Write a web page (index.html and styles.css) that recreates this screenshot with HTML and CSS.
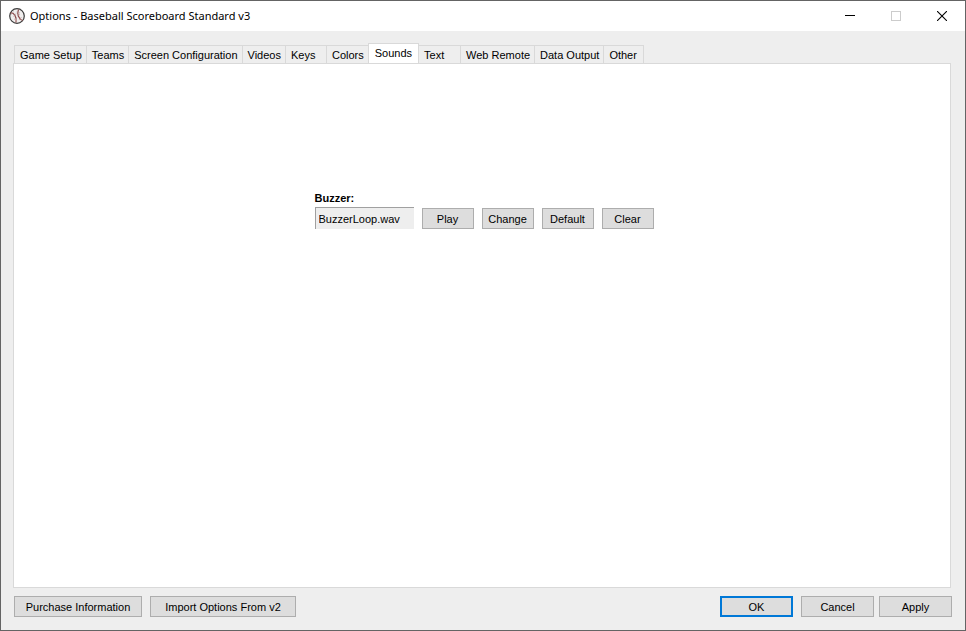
FILE: index.html
```html
<!DOCTYPE html>
<html lang="en">
<head>
    <meta charset="UTF-8">
    <meta name="viewport" content="width=device-width, initial-scale=1.0">
    <title>Options - Baseball Scoreboard Standard v3</title>
    <link rel="stylesheet" href="styles.css">
</head>
<body>
    <div class="window">
        <header class="title-bar">
            <svg class="app-icon" viewBox="0 0 16 16" aria-hidden="true">
                <circle cx="8" cy="8" r="7.3" fill="#f0eeee" stroke="#3c3c3c" stroke-width="1.2"/>
                <path d="M1.500 5C5 4.500 8 8.500 7 14.500M9.500 1.500C7.500 6 10 11.500 13.500 12.500" fill="none" stroke="#8c4a4a" stroke-width="1.2"/>
                <path d="M2.500 6.500L4.500 3.500M4.500 8.500L7 5.500M5 11.500L8 9.500M7.500 4L11 5M8 8L11 6.500M10 12L12.500 9" fill="none" stroke="#b09090" stroke-width="0.6"/>
            </svg>
            <h1>Options - Baseball Scoreboard Standard v3</h1>
            <div class="window-controls">
                <button type="button" aria-label="Minimize">
                    <svg viewBox="0 0 10 10"><path d="M0 4.500H10" stroke="#000000"/></svg>
                </button>
                <button type="button" aria-label="Maximize" disabled>
                    <svg viewBox="0 0 10 10"><rect x="0.5" y="0.5" width="9" height="9" fill="none" stroke="#cccccc"/></svg>
                </button>
                <button type="button" aria-label="Close">
                    <svg viewBox="0 0 10 10"><path d="M0 0L10 10M10 0L0 10" stroke="#000000" stroke-width="1.1"/></svg>
                </button>
            </div>
        </header>

        <main class="content">
            <div class="tabs" role="tablist">
                <button type="button" role="tab">Game Setup</button>
                <button type="button" role="tab">Teams</button>
                <button type="button" role="tab">Screen Configuration</button>
                <button type="button" role="tab">Videos</button>
                <button type="button" role="tab">Keys</button>
                <button type="button" role="tab">Colors</button>
                <button type="button" role="tab" class="active" aria-selected="true">Sounds</button>
                <button type="button" role="tab">Text</button>
                <button type="button" role="tab">Web Remote</button>
                <button type="button" role="tab">Data Output</button>
                <button type="button" role="tab">Other</button>
            </div>
            <section class="tab-page" role="tabpanel">
                <div class="sound">
                    <label for="buzzer">Buzzer:</label>
                    <div class="sound-row">
                        <input type="text" id="buzzer" value="BuzzerLoop.wav" readonly>
                        <button type="button" class="btn">Play</button>
                        <button type="button" class="btn">Change</button>
                        <button type="button" class="btn">Default</button>
                        <button type="button" class="btn">Clear</button>
                    </div>
                </div>
            </section>
        </main>

        <footer class="footer">
            <button type="button" class="btn purchase">Purchase Information</button>
            <button type="button" class="btn import">Import Options From v2</button>
            <div class="dialog-buttons">
                <button type="button" class="btn default">OK</button>
                <button type="button" class="btn">Cancel</button>
                <button type="button" class="btn">Apply</button>
            </div>
        </footer>
    </div>
</body>
</html>
```
FILE: styles.css
```css
* {
    box-sizing: border-box;
}
body {
    margin: 0;
    font-family: "Liberation Sans", Arial, sans-serif;
    font-size: 11px;
    line-height: 14px;
    color: #000;
}
button, input {
    font: inherit;
    color: inherit;
}
.window {
    display: flex;
    flex-direction: column;
    min-height: 100vh;
    border: 1px solid #646464;
    background-color: #eee;
}
.title-bar {
    display: flex;
    align-items: center;
    height: 30px;
    padding-left: 8px;
    background-color: #fff;
}
.app-icon {
    width: 16px;
    height: 16px;
    margin-right: 5px;
}
.title-bar h1 {
    margin: 0;
    font-family: "Noto Sans", sans-serif;
    font-size: 11px;
    font-weight: normal;
}
.window-controls {
    display: flex;
    align-self: stretch;
    margin-left: auto;
}
.window-controls button {
    display: flex;
    align-items: center;
    justify-content: center;
    width: 46px;
    padding: 0;
    border: none;
    background: none;
}
.window-controls svg {
    width: 10px;
    height: 10px;
}
.content {
    flex: 1;
    display: flex;
    flex-direction: column;
    padding: 12px 14px 0 12px;
}
.tabs {
    display: flex;
    align-items: flex-end;
    padding-left: 1px;
}
.tabs button {
    min-width: 41px;
    height: 18px;
    padding: 1px 4px 0 5px;
    border: 1px solid #d9d9d9;
    border-right: none;
    border-bottom: none;
    background-color: #eee;
    text-align: left;
}
.tabs button:last-child {
    border-right: 1px solid #d9d9d9;
}
.tabs .active {
    height: 21px;
    margin-bottom: -1px;
    padding: 0 6px 2px;
    border-right: 1px solid #d9d9d9;
    background-color: #fff;
}
.tabs .active + button {
    border-left: none;
}
.tab-page {
    flex: 1;
    display: flex;
    justify-content: center;
    align-items: flex-start;
    padding: 127px 0 24px 4px;
    border: 1px solid #d9d9d9;
    background-color: #fff;
}
.sound label {
    display: block;
    margin-bottom: 2px;
    font-weight: bold;
}
.sound-row {
    display: flex;
    align-items: flex-end;
    gap: 8px;
}
.sound-row input {
    width: 99px;
    height: 22px;
    padding: 1px 3px 0;
    border: none;
    border-top: 1px solid #a0a0a0;
    border-left: 1px solid #a0a0a0;
    background-color: #eee;
}
.btn {
    width: 52px;
    height: 21px;
    padding: 0;
    border: 1px solid #adadad;
    background-color: #ddd;
}
.footer {
    display: flex;
    gap: 8px;
    padding: 8px 13px 13px;
}
.footer .purchase {
    width: 128px;
}
.footer .import {
    width: 146px;
}
.dialog-buttons {
    display: flex;
    gap: 5px;
    margin-left: auto;
}
.dialog-buttons .btn {
    width: 73px;
}
.dialog-buttons .default {
    margin-right: 3px;
    border: 2px solid #0078d7;
}
```
